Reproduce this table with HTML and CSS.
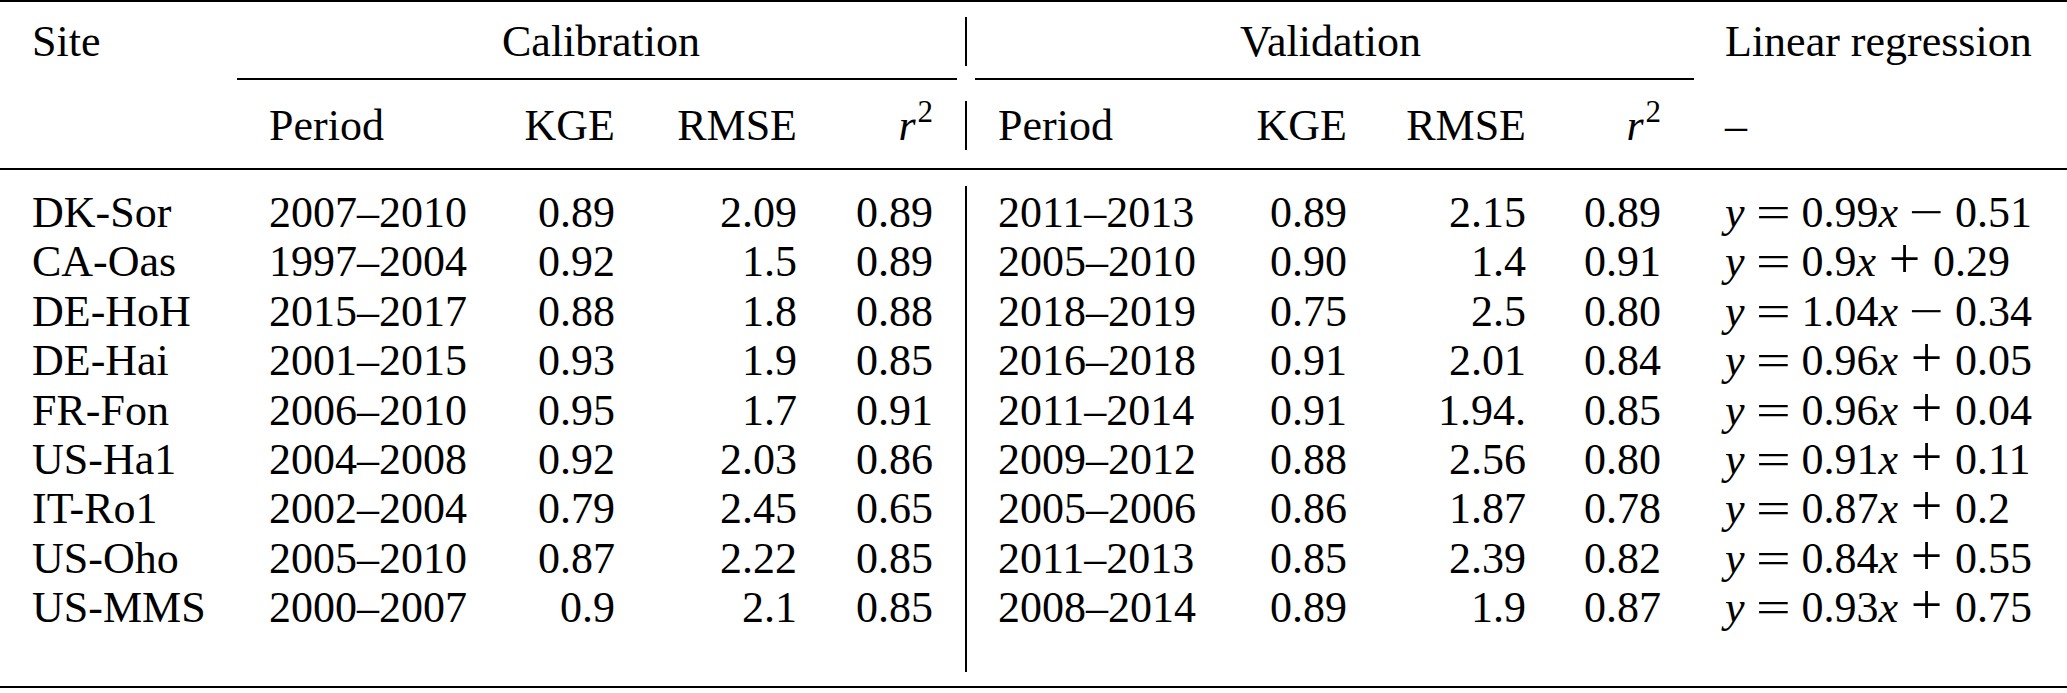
FILE: index.html
```html
<!DOCTYPE html>
<html lang="en">
<head>
<meta charset="utf-8">
<title>Calibration and validation table</title>
<link rel="stylesheet" href="styles.css">
</head>
<body>
<table class="tbl">
  <colgroup>
    <col class="w-site"><col class="w-per"><col class="w-kge"><col class="w-rmse"><col class="w-r2">
    <col class="w-vl">
    <col class="w-per2"><col class="w-kge2"><col class="w-rmse2"><col class="w-r22"><col class="w-lin">
  </colgroup>
  <tbody>
    <tr class="rule-row"><td colspan="11" class="rule-top"><div class="rule"></div></td></tr>
    <tr class="row">
      <td class="l site">Site</td>
      <td colspan="4" class="c">Calibration</td>
      <td class="vl"></td>
      <td colspan="4" class="c">Validation</td>
      <td class="l lin">Linear regression</td>
    </tr>
    <tr class="cmid-row">
      <td></td>
      <td colspan="4" class="cmid"><div class="rule cal"></div></td>
      <td></td>
      <td colspan="4" class="cmid"><div class="rule val"></div></td>
      <td></td>
    </tr>
    <tr class="row">
      <td class="l site"></td>
      <td class="l per">Period</td>
      <td class="r kge">KGE</td>
      <td class="r rmse">RMSE</td>
      <td class="r r2"><i>r</i><span class="sup">2</span></td>
      <td class="vl"></td>
      <td class="l per2">Period</td>
      <td class="r kge">KGE</td>
      <td class="r rmse">RMSE</td>
      <td class="r r22"><i>r</i><span class="sup">2</span></td>
      <td class="l lin">–</td>
    </tr>
    <tr class="rule-row"><td colspan="11" class="rule-mid"><div class="rule"></div></td></tr>

    <tr class="row body">
      <td class="l site">DK-Sor</td><td class="l per">2007–2010</td><td class="r kge">0.89</td><td class="r rmse">2.09</td><td class="r r2">0.89</td>
      <td class="vl"></td>
      <td class="l per2">2011–2013</td><td class="r kge">0.89</td><td class="r rmse">2.15</td><td class="r r22">0.89</td>
      <td class="l lin"><i>y</i><span class="op"><span class="g eq">=</span></span>0.99<i>x</i><span class="op"><span class="g eq">−</span></span>0.51</td>
    </tr>
    <tr class="row body">
      <td class="l site">CA-Oas</td><td class="l per">1997–2004</td><td class="r kge">0.92</td><td class="r rmse">1.5</td><td class="r r2">0.89</td>
      <td class="vl"></td>
      <td class="l per2">2005–2010</td><td class="r kge">0.90</td><td class="r rmse">1.4</td><td class="r r22">0.91</td>
      <td class="l lin"><i>y</i><span class="op"><span class="g eq">=</span></span>0.9<i>x</i><span class="op"><span class="plus">+</span></span>0.29</td>
    </tr>
    <tr class="row body">
      <td class="l site">DE-HoH</td><td class="l per">2015–2017</td><td class="r kge">0.88</td><td class="r rmse">1.8</td><td class="r r2">0.88</td>
      <td class="vl"></td>
      <td class="l per2">2018–2019</td><td class="r kge">0.75</td><td class="r rmse">2.5</td><td class="r r22">0.80</td>
      <td class="l lin"><i>y</i><span class="op"><span class="g eq">=</span></span>1.04<i>x</i><span class="op"><span class="g eq">−</span></span>0.34</td>
    </tr>
    <tr class="row body">
      <td class="l site">DE-Hai</td><td class="l per">2001–2015</td><td class="r kge">0.93</td><td class="r rmse">1.9</td><td class="r r2">0.85</td>
      <td class="vl"></td>
      <td class="l per2">2016–2018</td><td class="r kge">0.91</td><td class="r rmse">2.01</td><td class="r r22">0.84</td>
      <td class="l lin"><i>y</i><span class="op"><span class="g eq">=</span></span>0.96<i>x</i><span class="op"><span class="plus">+</span></span>0.05</td>
    </tr>
    <tr class="row body">
      <td class="l site">FR-Fon</td><td class="l per">2006–2010</td><td class="r kge">0.95</td><td class="r rmse">1.7</td><td class="r r2">0.91</td>
      <td class="vl"></td>
      <td class="l per2">2011–2014</td><td class="r kge">0.91</td><td class="r rmse">1.94.</td><td class="r r22">0.85</td>
      <td class="l lin"><i>y</i><span class="op"><span class="g eq">=</span></span>0.96<i>x</i><span class="op"><span class="plus">+</span></span>0.04</td>
    </tr>
    <tr class="row body">
      <td class="l site">US-Ha1</td><td class="l per">2004–2008</td><td class="r kge">0.92</td><td class="r rmse">2.03</td><td class="r r2">0.86</td>
      <td class="vl"></td>
      <td class="l per2">2009–2012</td><td class="r kge">0.88</td><td class="r rmse">2.56</td><td class="r r22">0.80</td>
      <td class="l lin"><i>y</i><span class="op"><span class="g eq">=</span></span>0.91<i>x</i><span class="op"><span class="plus">+</span></span>0.11</td>
    </tr>
    <tr class="row body">
      <td class="l site">IT-Ro1</td><td class="l per">2002–2004</td><td class="r kge">0.79</td><td class="r rmse">2.45</td><td class="r r2">0.65</td>
      <td class="vl"></td>
      <td class="l per2">2005–2006</td><td class="r kge">0.86</td><td class="r rmse">1.87</td><td class="r r22">0.78</td>
      <td class="l lin"><i>y</i><span class="op"><span class="g eq">=</span></span>0.87<i>x</i><span class="op"><span class="plus">+</span></span>0.2</td>
    </tr>
    <tr class="row body">
      <td class="l site">US-Oho</td><td class="l per">2005–2010</td><td class="r kge">0.87</td><td class="r rmse">2.22</td><td class="r r2">0.85</td>
      <td class="vl"></td>
      <td class="l per2">2011–2013</td><td class="r kge">0.85</td><td class="r rmse">2.39</td><td class="r r22">0.82</td>
      <td class="l lin"><i>y</i><span class="op"><span class="g eq">=</span></span>0.84<i>x</i><span class="op"><span class="plus">+</span></span>0.55</td>
    </tr>
    <tr class="row body">
      <td class="l site">US-MMS</td><td class="l per">2000–2007</td><td class="r kge">0.9</td><td class="r rmse">2.1</td><td class="r r2">0.85</td>
      <td class="vl"></td>
      <td class="l per2">2008–2014</td><td class="r kge">0.89</td><td class="r rmse">1.9</td><td class="r r22">0.87</td>
      <td class="l lin"><i>y</i><span class="op"><span class="g eq">=</span></span>0.93<i>x</i><span class="op"><span class="plus">+</span></span>0.75</td>
    </tr>
    <tr class="tail-row">
      <td colspan="5"></td><td class="vl"></td><td colspan="5"></td>
    </tr>
    <tr class="rule-row"><td colspan="11" class="rule-bot"><div class="rule"></div></td></tr>
  </tbody>
</table>
</body>
</html>
```

FILE: styles.css
```css
html, body {
  margin: 0;
  padding: 0;
  background: #ffffff;
  overflow: hidden;
}

body {
  font-family: "Liberation Serif", "Times New Roman", serif;
  font-size: 44px;
  color: #000000;
}

.tbl {
  width: 2067px;
  table-layout: fixed;
  border-collapse: collapse;
  border-spacing: 0;
}

.w-site { width: 237px; }
.w-per { width: 263px; }
.w-kge { width: 147px; }
.w-rmse { width: 182px; }
.w-r2 { width: 136px; }
.w-vl { width: 2px; }
.w-per2 { width: 273px; }
.w-kge2 { width: 139px; }
.w-rmse2 { width: 179px; }
.w-r22 { width: 136px; }
.w-lin { width: 373px; }

.tbl td {
  padding: 0;
  white-space: nowrap;
  vertical-align: top;
}

/* text rows: 49px tall, baseline ~40px below the row top */
.tbl .row td {
  height: 49px;
  box-sizing: border-box;
  line-height: 44px;
  padding-top: 3px;
  padding-bottom: 2px;
}

.tbl .row.body td {
  height: 49.4px;
  padding-top: 5px;
  padding-bottom: 0;
}

.tbl .row td.vl,
.tbl .tail-row td.vl {
  background: #000000;
  padding: 0;
}

.tbl .tail-row td {
  height: 41px;
}

.l { text-align: left; }
.r { text-align: right; }
.c { text-align: center; }

.tbl .row td.site { padding-left: 32px; }
.tbl .row td.per { padding-left: 32px; }
.tbl .row td.kge { padding-right: 32px; }
.tbl .row td.rmse { padding-right: 32px; }
.tbl .row td.r2 { padding-right: 32px; }
.tbl .row td.per2 { padding-left: 31px; }
.tbl .row td.r22 { padding-right: 33px; }
.tbl .row td.lin { padding-left: 31px; }

.rule {
  height: 2px;
  background: #000000;
}

.tbl td.rule-top { padding: 0 0 15px 0; }
.tbl td.rule-mid { padding: 18px 0 16px 0; }
.tbl td.rule-bot { padding: 14px 0 0 0; }

.tbl .cmid-row td {
  padding: 12px 0 21px 0;
}

.rule.cal { margin-right: 8px; }
.rule.val { margin-left: 8px; }

.sup {
  font-size: 31px;
  line-height: 0;
  vertical-align: 18px;
  margin-left: 2px;
}

.op {
  display: inline-block;
  width: 35px;
  margin: 0 11px;
  text-align: center;
}

.g {
  display: inline-block;
}

.g.eq { transform: scaleX(1.4); }

.plus {
  font-size: 56px;
  line-height: 0;
  vertical-align: -2px;
}
```
